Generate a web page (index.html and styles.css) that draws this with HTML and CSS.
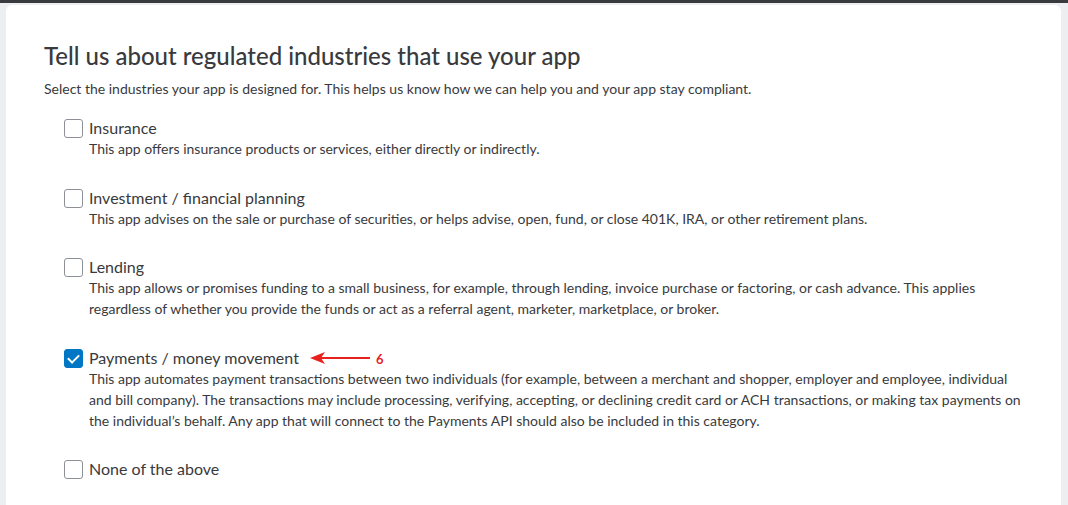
FILE: index.html
```html
<!DOCTYPE html>
<html lang="en">
<head>
    <meta charset="UTF-8">
    <meta name="viewport" content="width=device-width, initial-scale=1.0">
    <title>Regulated industries</title>
    <link rel="stylesheet" href="styles.css">
</head>
<body>
    <div class="topbar"></div>

    <div class="page">
        <div class="card">
            <h1>Tell us about regulated industries that use your app</h1>
            <p class="intro">Select the industries your app is designed for. This helps us know how we can help you and your app stay compliant.</p>

            <div class="industries">
                <label class="industry">
                    <input type="checkbox" name="industry" value="insurance">
                    <span class="box"></span>
                    <span class="text">
                        <span class="name">Insurance</span>
                        <span class="desc">This app offers insurance products or services, either directly or indirectly.</span>
                    </span>
                </label>

                <label class="industry">
                    <input type="checkbox" name="industry" value="investment">
                    <span class="box"></span>
                    <span class="text">
                        <span class="name">Investment / financial planning</span>
                        <span class="desc">This app advises on the sale or purchase of securities, or helps advise, open, fund, or close 401K, IRA, or other retirement plans.</span>
                    </span>
                </label>

                <label class="industry">
                    <input type="checkbox" name="industry" value="lending">
                    <span class="box"></span>
                    <span class="text">
                        <span class="name">Lending</span>
                        <span class="desc">This app allows or promises funding to a small business, for example, through lending, invoice purchase or factoring, or cash advance. This applies regardless of whether you provide the funds or act as a referral agent, marketer, marketplace, or broker.</span>
                    </span>
                </label>

                <label class="industry">
                    <input type="checkbox" name="industry" value="payments" checked>
                    <span class="box"></span>
                    <span class="text">
                        <span class="name">Payments / money movement
                            <span class="callout">
                                <svg width="60" height="12" viewBox="0 0 60 12">
                                    <path d="M3 6 H60" stroke="#e8211c" stroke-width="2"/>
                                    <path d="M0 6 L15 0 L11 6 L15 12 Z" fill="#e8211c"/>
                                </svg>
                                <span class="step">6</span>
                            </span>
                        </span>
                        <span class="desc">This app automates payment transactions between two individuals (for example, between a merchant and shopper, employer and employee, individual and bill company). The transactions may include processing, verifying, accepting, or declining credit card or ACH transactions, or making tax payments on the individual’s behalf. Any app that will connect to the Payments API should also be included in this category.</span>
                    </span>
                </label>

                <label class="industry">
                    <input type="checkbox" name="industry" value="none">
                    <span class="box"></span>
                    <span class="text">
                        <span class="name">None of the above</span>
                    </span>
                </label>
            </div>
        </div>
    </div>
</body>
</html>
```

FILE: styles.css
```css
body {
    font-family: Lato, "Noto Sans", sans-serif;
    background-color: #eceef1;
    color: #393a3d;
    margin: 0;
    padding: 0;
    overflow: hidden;
}
.topbar {
    height: 3px;
    background: #393a3d;
}
.page {
    padding: 2px 7px 0 6px;
}
.card {
    background: #ffffff;
    border-radius: 6px 6px 0 0;
    padding: 35px 28px 40px 38px;
    min-height: 500px;
}
h1 {
    font-size: 24px;
    font-weight: 500;
    margin: 0 0 8px;
    line-height: 32px;
}
.intro {
    font-size: 14px;
    margin: 0 0 20px;
    line-height: 18px;
}
.industries {
    padding-left: 20px;
}
.industry {
    display: flex;
    align-items: flex-start;
    margin-bottom: 28.5px;
    cursor: pointer;
}
.industry input {
    display: none;
}
.box {
    flex: none;
    width: 17px;
    height: 17px;
    border: 1px solid #8d9096;
    border-radius: 3px;
    margin-top: 1px;
    margin-right: 6px;
    background: #ffffff;
    position: relative;
}
.industry input:checked + .box {
    background: #0077c5;
    border-color: #0077c5;
}
.industry input:checked + .box::after {
    content: "";
    position: absolute;
    left: 5px;
    top: 2px;
    width: 5px;
    height: 9px;
    border: solid #ffffff;
    border-width: 0 2.5px 2.5px 0;
    transform: rotate(45deg);
}
.text {
    display: flex;
    flex-direction: column;
}
.name {
    font-size: 16px;
    line-height: 20px;
    height: 20px;
    display: flex;
    align-items: center;
}
.desc {
    font-size: 14px;
    line-height: 21px;
}
.callout {
    display: inline-flex;
    align-items: center;
    height: 20px;
    margin-left: 11px;
}
.step {
    color: #e8211c;
    font-size: 13px;
    line-height: 20px;
    font-weight: bold;
    margin-left: 6px;
    position: relative;
    top: 1px;
}
```
